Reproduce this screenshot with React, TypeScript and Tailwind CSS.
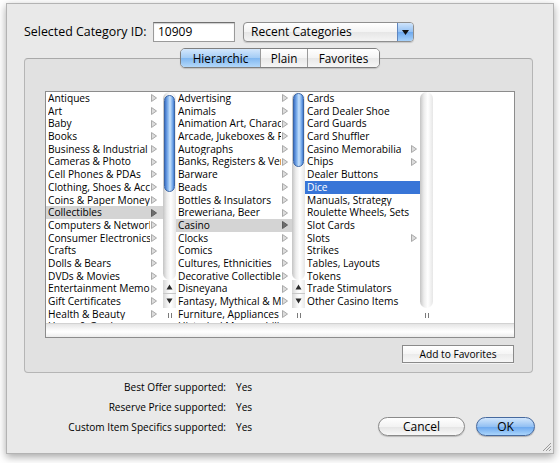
import React from "react";

type Item = { t: string; a?: boolean; sel?: "gray" | "blue" };

const col1: Item[] = [
  "Antiques", "Art", "Baby", "Books", "Business & Industrial", "Cameras & Photo",
  "Cell Phones & PDAs", "Clothing, Shoes & Accessories", "Coins & Paper Money",
  "Collectibles", "Computers & Networking", "Consumer Electronics", "Crafts",
  "Dolls & Bears", "DVDs & Movies", "Entertainment Memorabilia", "Gift Certificates",
  "Health & Beauty", "Home & Garden",
].map((t) => ({ t, a: true, sel: t === "Collectibles" ? "gray" : undefined }));

const col2: Item[] = [
  "Advertising", "Animals", "Animation Art, Characters", "Arcade, Jukeboxes & Pinball",
  "Autographs", "Banks, Registers & Vending", "Barware", "Beads", "Bottles & Insulators",
  "Breweriana, Beer", "Casino", "Clocks", "Comics", "Cultures, Ethnicities",
  "Decorative Collectibles", "Disneyana", "Fantasy, Mythical & Magic",
  "Furniture, Appliances & Fans", "Historical Memorabilia",
].map((t) => ({ t, a: true, sel: t === "Casino" ? "gray" : undefined }));

const col3: Item[] = [
  { t: "Cards" }, { t: "Card Dealer Shoe" }, { t: "Card Guards" }, { t: "Card Shuffler" },
  { t: "Casino Memorabilia", a: true }, { t: "Chips", a: true }, { t: "Dealer Buttons" },
  { t: "Dice", sel: "blue" }, { t: "Manuals, Strategy" }, { t: "Roulette Wheels, Sets" },
  { t: "Slot Cards" }, { t: "Slots", a: true }, { t: "Strikes" }, { t: "Tables, Layouts" },
  { t: "Tokens" }, { t: "Trade Stimulators" }, { t: "Other Casino Items" },
];

function Arrow({ dark }: { dark?: boolean }) {
  return (
    <svg width="6" height="8" viewBox="0 0 6 8" className="shrink-0">
      <path
        d="M0.5 0.5 L5.5 4 L0.5 7.5 Z"
        fill={dark ? "#6e6e6e" : "#dcdcdc"}
        stroke={dark ? "#5c5c5c" : "#a9a9a9"}
        strokeWidth="1"
        strokeLinejoin="round"
      />
    </svg>
  );
}

function List({ items, width, mr }: { items: Item[]; width: string; mr: string }) {
  return (
    <div className={`${width} h-full overflow-hidden bg-white`}>
      {items.map((it) => (
        <div
          key={it.t}
          className={`flex items-center h-[12.7px] pl-[2px] ${
            it.sel === "gray"
              ? "bg-[#d4d4d4] text-black"
              : it.sel === "blue"
              ? "bg-[#3875d7] text-white"
              : "text-black"
          }`}
        >
          <span className="flex-1 overflow-hidden whitespace-nowrap leading-[12.7px]">{it.t}</span>
          <div className={`${mr} ml-[1px] w-[6px] flex items-center`}>
            {it.a ? <Arrow dark={it.sel === "gray"} /> : null}
          </div>
        </div>
      ))}
    </div>
  );
}

function ResizeHandle() {
  return (
    <div className="h-[15px] flex items-center justify-center gap-[2px] bg-white">
      <div className="w-[1px] h-[5px] bg-[#7a7a7a]" />
      <div className="w-[1px] h-[5px] bg-[#7a7a7a]" />
    </div>
  );
}

function Scroller({ knob, arrows }: { knob?: string; arrows?: boolean }) {
  return (
    <div className="w-[13px] h-full flex flex-col bg-white">
      <div className="flex-1 rounded-full bg-[linear-gradient(to_right,#c4c4c4,#ececec_30%,#ffffff_60%,#e6e6e6)] flex flex-col">
        {knob ? (
          <div className={`${knob} mx-[1px] rounded-full border border-[#3b66a6] bg-[linear-gradient(to_right,#3f74c9,#8bbaf1_35%,#c9e2fb_55%,#7fb1ee_80%,#467dd1)]`} />
        ) : null}
      </div>
      {arrows ? (
        <div className="flex flex-col bg-[linear-gradient(to_right,#d6d6d6,#f6f6f6_40%,#ffffff_60%,#e9e9e9)]">
          <div className="h-[14px] flex items-center justify-center border-b border-[#c8c8c8]">
            <svg width="7" height="6" viewBox="0 0 7 6">
              <path d="M3.5 0.5 L6.5 5.5 L0.5 5.5 Z" fill="#2a2a2a" />
            </svg>
          </div>
          <div className="h-[14px] flex items-center justify-center">
            <svg width="7" height="6" viewBox="0 0 7 6">
              <path d="M0.5 0.5 L6.5 0.5 L3.5 5.5 Z" fill="#2a2a2a" />
            </svg>
          </div>
        </div>
      ) : null}
      <ResizeHandle />
    </div>
  );
}

function Browser() {
  return (
    <div className="w-[470px] h-[247px] border border-[#8c8c8c] bg-white flex flex-col">
      <div className="h-[231px] flex text-[10.2px]">
        <div className="flex h-full">
          <List items={col1} width="w-[117px]" mr="mr-[6px]" />
          <Scroller knob="h-[97px] mt-[3px]" arrows />
        </div>
        <div className="flex h-full">
          <List items={col2} width="w-[116px]" mr="mr-[4px]" />
          <Scroller knob="h-[74px] mt-[1px]" arrows />
        </div>
        <div className="flex h-full">
          <List items={col3} width="w-[115px]" mr="mr-[3px]" />
          <Scroller />
        </div>
        <div className="flex-1 h-full bg-white" />
      </div>
      <div className="h-[14px] border-t border-[#d2d2d2] bg-[linear-gradient(to_bottom,#e4e4e4,#f8f8f8_40%,#ffffff_60%,#ececec)]" />
    </div>
  );
}

export default function App() {
  return (
    <div className="w-[560px] h-[463px] bg-white overflow-hidden pt-[3px] pl-[6px] font-['Open_Sans','Noto_Sans',sans-serif] font-medium text-black">
      <div className="relative w-[548px] h-[451px] bg-[#e9e9e9] border border-[#b3b3b3] shadow-[0_3px_8px_rgba(0,0,0,0.35)] flex flex-col">
        {/* top row */}
        <div className="mt-[18px] ml-[17px] h-[20px] flex items-center">
          <div className="w-[129px] text-[12.4px] whitespace-nowrap leading-[20px]">Selected Category ID:</div>
          <div className="w-[82px] h-[20px] bg-white border border-[#9a9a9a] border-t-[#6f6f6f] shadow-[inset_0_1px_1px_rgba(0,0,0,0.2)] pl-[4px] text-[12px] leading-[18px]">
            10909
          </div>
          <div className="ml-[8px] w-[171px] h-[20px] rounded-[4px] border border-[#8f8f8f] bg-[linear-gradient(to_bottom,#ffffff,#f3f3f3_50%,#e6e6e6_51%,#f4f4f4)] flex items-center overflow-hidden shadow-[0_1px_1px_rgba(0,0,0,0.15)]">
            <span className="flex-1 pl-[7px] text-[12px] leading-[18px] whitespace-nowrap">Recent Categories</span>
            <div className="w-[16px] h-full border-l border-[#5f86bf] bg-[linear-gradient(to_bottom,#cfe4fb,#93c0f3_50%,#6ea9ee_51%,#a8d2fa)] flex items-center justify-center">
              <svg width="7" height="5" viewBox="0 0 7 5">
                <path d="M0 0 L7 0 L3.5 5 Z" fill="#111" />
              </svg>
            </div>
          </div>
        </div>

        {/* group box */}
        <div className="mt-[16px] ml-[17px] w-[509px] rounded-[4px] border border-[#b5b5b5] border-t-[#a9a9a9] bg-[#e1e1e1] pl-[20px] pr-[18px] pb-[9px] flex flex-col">
          <div className="-mt-[11px] ml-[135px] w-[200px] h-[20px] flex rounded-[5px] border border-[#7f7f7f] overflow-hidden shadow-[0_1px_1px_rgba(0,0,0,0.15)] text-[11.7px] leading-[18px]">
            <div className="w-[79px] text-center bg-[linear-gradient(to_bottom,#d3e7fc,#a3ccf5_50%,#80b7f0_51%,#b3d8fa)]">Hierarchic</div>
            <div className="w-[47px] text-center border-l border-[#9a9a9a] bg-[linear-gradient(to_bottom,#ffffff,#f4f4f4_50%,#e8e8e8_51%,#f6f6f6)]">Plain</div>
            <div className="flex-1 text-center border-l border-[#9a9a9a] bg-[linear-gradient(to_bottom,#ffffff,#f4f4f4_50%,#e8e8e8_51%,#f6f6f6)]">Favorites</div>
          </div>
          <div className="mt-[23px]">
            <Browser />
          </div>
          <div className="mt-[7px] flex justify-end">
            <div className="w-[112px] h-[18px] border border-[#8a8a8a] bg-[linear-gradient(to_bottom,#ffffff,#f5f5f5_50%,#ebebeb_51%,#f7f7f7)] text-[10.2px] leading-[16px] text-center shadow-[0_1px_0_rgba(255,255,255,0.6)]">
              Add to Favorites
            </div>
          </div>
        </div>

        {/* bottom section */}
        <div className="mt-[4px] flex items-end">
          <div className="ml-[17px] grid grid-cols-[202px_auto] gap-x-[10px] text-[10.1px]">
            <div className="h-[20px] leading-[20px] text-right whitespace-nowrap">Best Offer supported:</div>
            <div className="h-[20px] leading-[20px]">Yes</div>
            <div className="h-[20px] leading-[20px] text-right whitespace-nowrap">Reserve Price supported:</div>
            <div className="h-[20px] leading-[20px]">Yes</div>
            <div className="h-[20px] leading-[20px] text-right whitespace-nowrap">Custom Item Specifics supported:</div>
            <div className="h-[20px] leading-[20px]">Yes</div>
          </div>
          <div className="ml-auto mr-[18px] mb-[1px] flex gap-[11px]">
            <div className="w-[87px] h-[19px] rounded-full border border-[#8a8a8a] bg-[linear-gradient(to_bottom,#ffffff,#f3f3f3_50%,#e4e4e4_51%,#f8f8f8)] text-[12px] leading-[17px] text-center shadow-[0_1px_1px_rgba(0,0,0,0.2)]">
              Cancel
            </div>
            <div className="w-[59px] h-[19px] rounded-full border border-[#46699e] bg-[linear-gradient(to_bottom,#d2e6fc,#94c1f3_50%,#6aa6ee_51%,#a9d4fb)] text-[12px] leading-[17px] text-center shadow-[0_1px_1px_rgba(0,0,0,0.25)]">
              OK
            </div>
          </div>
        </div>

        {/* resize grip */}
        <svg className="absolute right-[1px] bottom-[1px]" width="11" height="11" viewBox="0 0 11 11">
          <path d="M10 2 L2 10 M10 5 L5 10 M10 8 L8 10" stroke="#9a9a9a" strokeWidth="1" />
        </svg>
      </div>
    </div>
  );
}
